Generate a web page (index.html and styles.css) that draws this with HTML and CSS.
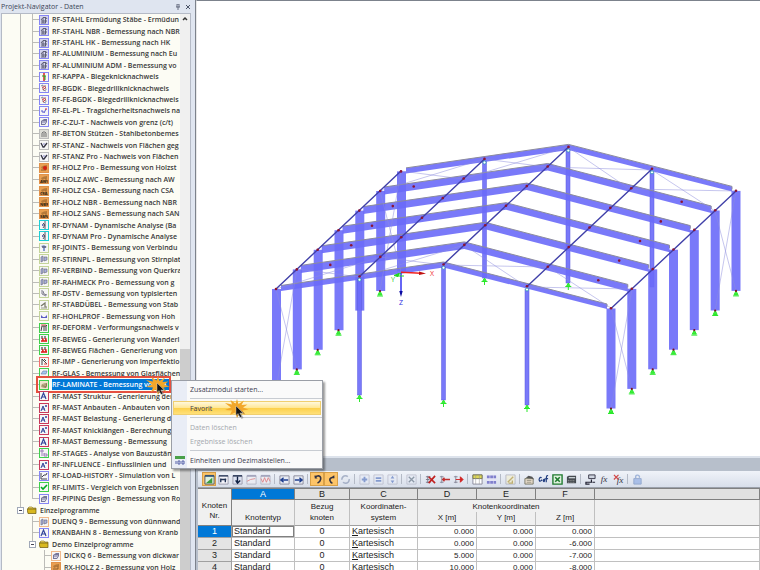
FILE: index.html
```html
<!DOCTYPE html>
<html lang="de">
<head>
    <meta charset="UTF-8">
    <title>Projekt-Navigator - Daten</title>
    <link rel="stylesheet" href="styles.css">
</head>
<body>
    <!-- Shared icons -->
    <svg class="defs" aria-hidden="true">
        <symbol id="i-steel" viewBox="0 0 8 8"><path d="M0 0h8v8H0z" fill="#d4d4ee"/><path d="M1 4l2-2.500h3L7 3M3 2v5M5.500 2v5M1 5h6M1 7h5" fill="none" stroke="#55556a" stroke-width=".9"/></symbol>
        <symbol id="i-kappa" viewBox="0 0 8 8"><path d="M4 0v8" stroke="#d22" stroke-width="1.500"/><path d="M2 3h4M5 3v4" stroke="#2a2"/></symbol>
        <symbol id="i-bgdk" viewBox="0 0 8 8"><path d="M1 2l2-1v5l3 1M5 1l1 5" fill="none" stroke="#8a8a9a"/><path d="M2 4l3-2M3 6l3-3" stroke="#d44"/></symbol>
        <symbol id="i-elpl" viewBox="0 0 8 8"><path d="M1 4h2v2M4 6l2-4" fill="none" stroke="#55c"/><path d="M5 2h2" stroke="#d33"/></symbol>
        <symbol id="i-czut" viewBox="0 0 8 8"><path d="M1 3l3-2h3v3L5 7H1z" fill="#77779a"/><path d="M2 4h4M2 5.500h3" stroke="#dde"/></symbol>
        <symbol id="i-beton" viewBox="0 0 8 8"><path d="M0 0h8v8H0z" fill="#deded8"/><path d="M2 7V3l1-1h2l1 1v4M4 3v4" fill="none" stroke="#777"/></symbol>
        <symbol id="i-stanz" viewBox="0 0 8 8"><path d="M1 2l2 4h1l3-4" fill="none" stroke="#334" stroke-width="1.300"/><path d="M3 3h2" stroke="#88c"/></symbol>
        <symbol id="i-holz" viewBox="0 0 8 8"><path d="M0 0h8v8H0z" fill="#e9a052"/><path d="M1 3l3-1.500L7 1v2L2 5z" fill="#b5793a"/><path d="M1 6h5V3" fill="none" stroke="#7b5226" stroke-width=".8"/></symbol>
        <symbol id="i-dynam" viewBox="0 0 8 8"><path d="M5 0v8M2 4h3M3 2l2 2-2 3" fill="none" stroke="#556"/><path d="M2 4h1" stroke="#33c"/></symbol>
        <symbol id="i-joint" viewBox="0 0 8 8"><path d="M1 2l3-1 3 2-2 1v3H3V4z" fill="#8a9ad0"/><path d="M2 3h4" stroke="#445"/></symbol>
        <symbol id="i-plate" viewBox="0 0 8 8"><path d="M1 2l2-1v5l-2 1zM4 2h3v3L4 6z" fill="#a8b0dc" stroke="#667" stroke-width=".6"/></symbol>
        <symbol id="i-dstv" viewBox="0 0 8 8"><path d="M2 1v4l4 2M3 2l1 3 3 1" fill="none" stroke="#7c7c8c"/></symbol>
        <symbol id="i-dowel" viewBox="0 0 8 8"><path d="M1 5l4-3v4h2" fill="none" stroke="#776" stroke-width="1.200"/><path d="M1 7h6" stroke="#998"/></symbol>
        <symbol id="i-hohl" viewBox="0 0 8 8"><path d="M1 3v3h6V3L5 5H3z" fill="#5a5ac4"/></symbol>
        <symbol id="i-deform" viewBox="0 0 8 8"><path d="M1 7L2 2h4l1-1M4 2v5M6 2v5" fill="none" stroke="#444"/><path d="M1 1h5" stroke="#d55"/></symbol>
        <symbol id="i-beweg" viewBox="0 0 8 8"><path d="M2 1v3M5 1v3" stroke="#222"/><path d="M1 6h6M2 4h1v2M5 4h1v2" fill="none" stroke="#d11" stroke-width="1.300"/></symbol>
        <symbol id="i-imp" viewBox="0 0 8 8"><path d="M2 1v6M2 1l5 5M4 1l2 2" stroke="#444"/><path d="M4 6h3" stroke="#d44"/></symbol>
        <symbol id="i-glas" viewBox="0 0 8 8"><path d="M1 5l2-3h4L6 5z" fill="#a6c8ee" stroke="#67a" stroke-width=".6"/></symbol>
        <symbol id="i-lam" viewBox="0 0 8 8"><path d="M0 0h8v8H0z" fill="#eee4cc"/><path d="M1 6l1-3 5-1v3L6 7z" fill="#8b7a55"/><path d="M1 4l5-1M1 5.500l5-1" stroke="#ddd0a8" stroke-width=".6"/></symbol>
        <symbol id="i-mast" viewBox="0 0 8 8"><path d="M1 7l2.500-6L6 7M2 5h4" fill="none" stroke="#33479c" stroke-width="1.200"/></symbol>
        <symbol id="i-mast2" viewBox="0 0 8 8"><path d="M1 7l2-5 2 5M2 5h3M6 1v2M5 2h2" fill="none" stroke="#33479c"/></symbol>
        <symbol id="i-stages" viewBox="0 0 8 8"><path d="M1 1h2v2H1zM2 4v3M4 4v3h3V5M4 5h3" fill="none" stroke="#86a" stroke-width=".8"/></symbol>
        <symbol id="i-load" viewBox="0 0 8 8"><path d="M1 1v6h6M2 5l2-2h2l1-2" fill="none" stroke="#445"/></symbol>
        <symbol id="i-check" viewBox="0 0 8 8"><path d="M1 4l2 2 4-4" fill="none" stroke="#0a2" stroke-width="1.600"/></symbol>
        <symbol id="i-folder" viewBox="0 0 10 8"><path d="M1 2l1-1h3l1 1h3v1H1z" fill="#f7e06a" stroke="#7a6410" stroke-width=".6"/><path d="M0 3h9v4.500H1z" fill="#d8b820" stroke="#6a560c" stroke-width=".7"/></symbol>
        <symbol id="i-burst" viewBox="0 0 24 20">
            <path d="M12 0l1.500 5L19 1.500 16.500 6l6-.5-4.500 3 5.500 2-6 1 3 4.500-5.500-3L12 19l-2-5.500L5 16l2-4.500-7-.5 6-2.500L0 4l7 1.500L5.500 1l5 3.500z" fill="#f2a72b"/>
            <path d="M12 8v10l2.500-2 2 4 2-1-2-4 3.500-.5z" fill="#555" opacity=".4"/>
            <path d="M11 7v9.500l2-2 2 4 1.800-1-2-3.500H18z" fill="#111" stroke="#ddd" stroke-width=".4"/>
        </symbol>
    </svg>

    <!-- Project navigator -->
    <aside class="navigator">
        <header class="nav-title">
            <h1>Projekt-Navigator - Daten</h1>
            <button class="nav-btn" aria-label="Anheften"><svg viewBox="0 0 6 6"><path d="M2 0v3M4 0v3M1 3h4M3 3v3M2 0h2" fill="none" stroke="#4b5468" stroke-width=".8"/></svg></button>
            <button class="nav-btn" aria-label="Schließen"><svg viewBox="0 0 6 6"><path d="M1 1l4 4M5 1L1 5" stroke="#4b5468"/></svg></button>
        </header>
        <div class="nav-body">
            <ul class="tree">
                <li><svg class="ico blue"><use href="#i-steel"/></svg><span>RF-STAHL Ermüdung Stäbe - Ermüdun</span></li>
                <li><svg class="ico blue"><use href="#i-steel"/></svg><span>RF-STAHL NBR - Bemessung nach NBR</span></li>
                <li><svg class="ico blue"><use href="#i-steel"/></svg><span>RF-STAHL HK - Bemessung nach HK</span></li>
                <li><svg class="ico blue"><use href="#i-steel"/></svg><span>RF-ALUMINIUM - Bemessung nach Eu</span></li>
                <li><svg class="ico blue"><use href="#i-steel"/></svg><span>RF-ALUMINIUM ADM - Bemessung vo</span></li>
                <li><svg class="ico blue"><use href="#i-kappa"/></svg><span>RF-KAPPA - Biegeknicknachweis</span></li>
                <li><svg class="ico blue"><use href="#i-bgdk"/></svg><span>RF-BGDK - Biegedrillknicknachweis</span></li>
                <li><svg class="ico blue"><use href="#i-bgdk"/></svg><span>RF-FE-BGDK - Biegedrillknicknachweis</span></li>
                <li><svg class="ico blue"><use href="#i-elpl"/></svg><span>RF-EL-PL - Tragsicherheitsnachweis na</span></li>
                <li><svg class="ico blue"><use href="#i-czut"/></svg><span>RF-C-ZU-T - Nachweis von grenz (c/t)</span></li>
                <li><svg class="ico gray"><use href="#i-beton"/></svg><span>RF-BETON Stützen - Stahlbetonbemes</span></li>
                <li><svg class="ico gray"><use href="#i-stanz"/></svg><span>RF-STANZ - Nachweis von Flächen geg</span></li>
                <li><svg class="ico gray"><use href="#i-stanz"/></svg><span>RF-STANZ Pro - Nachweis von Flächen</span></li>
                <li><svg class="ico orange"><use href="#i-holz"/><circle cx="5" cy="4" r="2" fill="#d21f10"/></svg><span>RF-HOLZ Pro - Bemessung von Holzst</span></li>
                <li><svg class="ico orange"><use href="#i-holz"/><text x="0" y="8">AWC</text></svg><span>RF-HOLZ AWC - Bemessung nach AW</span></li>
                <li><svg class="ico orange"><use href="#i-holz"/><text x="0" y="8">CSA</text></svg><span>RF-HOLZ CSA - Bemessung nach CSA</span></li>
                <li><svg class="ico orange"><use href="#i-holz"/><text x="0" y="8">NBR</text></svg><span>RF-HOLZ NBR - Bemessung nach NBR</span></li>
                <li><svg class="ico orange"><use href="#i-holz"/><text x="0" y="8">SAN</text></svg><span>RF-HOLZ SANS - Bemessung nach SAN</span></li>
                <li><svg class="ico cyan"><use href="#i-dynam"/></svg><span>RF-DYNAM - Dynamische Analyse (Ba</span></li>
                <li><svg class="ico cyan"><use href="#i-dynam"/></svg><span>RF-DYNAM Pro - Dynamische Analyse</span></li>
                <li><svg class="ico olive"><use href="#i-joint"/></svg><span>RF-JOINTS - Bemessung von Verbindu</span></li>
                <li><svg class="ico olive"><use href="#i-plate"/></svg><span>RF-STIRNPL - Bemessung von Stirnplat</span></li>
                <li><svg class="ico olive"><use href="#i-plate"/></svg><span>RF-VERBIND - Bemessung von Querkra</span></li>
                <li><svg class="ico olive"><use href="#i-plate"/></svg><span>RF-RAHMECK Pro - Bemessung von g</span></li>
                <li><svg class="ico olive"><use href="#i-dstv"/></svg><span>RF-DSTV - Bemessung von typisierten</span></li>
                <li><svg class="ico olive"><use href="#i-dowel"/></svg><span>RF-STABDÜBEL - Bemessung von Stab</span></li>
                <li><svg class="ico olive"><use href="#i-hohl"/></svg><span>RF-HOHLPROF - Bemessung von Hoh</span></li>
                <li><svg class="ico green"><use href="#i-deform"/></svg><span>RF-DEFORM - Verformungsnachweis v</span></li>
                <li><svg class="ico green"><use href="#i-beweg"/></svg><span>RF-BEWEG - Generierung von Wanderl</span></li>
                <li><svg class="ico green"><use href="#i-beweg"/></svg><span>RF-BEWEG Flächen - Generierung von</span></li>
                <li><svg class="ico red"><use href="#i-imp"/></svg><span>RF-IMP - Generierung von Imperfektio</span></li>
                <li><svg class="ico green"><use href="#i-glas"/></svg><span>RF-GLAS - Bemessung von Glasflächen</span></li>
                <li class="selected"><svg class="ico green"><use href="#i-lam"/></svg><span>RF-LAMINATE - Bemessung von La</span></li>
                <li><svg class="ico crimson"><use href="#i-mast"/></svg><span>RF-MAST Struktur - Generierung der</span></li>
                <li><svg class="ico crimson"><use href="#i-mast2"/></svg><span>RF-MAST Anbauten - Anbauten von</span></li>
                <li><svg class="ico crimson"><use href="#i-mast2"/></svg><span>RF-MAST Belastung - Generierung d</span></li>
                <li><svg class="ico crimson"><use href="#i-mast2"/></svg><span>RF-MAST Knicklängen - Berechnung</span></li>
                <li><svg class="ico crimson"><use href="#i-mast"/></svg><span>RF-MAST Bemessung - Bemessung</span></li>
                <li><svg class="ico green"><use href="#i-stages"/></svg><span>RF-STAGES - Analyse von Bauzustän</span></li>
                <li><svg class="ico crimson"><use href="#i-mast2"/></svg><span>RF-INFLUENCE - Einflusslinien und</span></li>
                <li><svg class="ico blue"><use href="#i-load"/></svg><span>RF-LOAD-HISTORY - Simulation von L</span></li>
                <li><svg class="ico green"><use href="#i-check"/></svg><span>RF-LIMITS - Vergleich von Ergebnissen</span></li>
                <li class="last"><svg class="ico blue"><use href="#i-czut"/></svg><span>RF-PIPING Design - Bemessung von Ro</span></li>
                <li class="folder"><i class="expander"></i><svg class="dir"><use href="#i-folder"/></svg><span>Einzelprogramme</span></li>
                <li class="program"><svg class="ico peach"><use href="#i-plate"/></svg><span>DUENQ 9 - Bemessung von dünnwand</span></li>
                <li class="program"><svg class="ico blue"><use href="#i-mast"/></svg><span>KRANBAHN 8 - Bemessung von Kranb</span></li>
                <li class="subfolder"><i class="expander"></i><svg class="dir"><use href="#i-folder"/></svg><span>Demo Einzelprogramme</span></li>
                <li class="demo"><svg class="ico peach"><use href="#i-czut"/></svg><span>DICKQ 6 - Bemessung von dickwar</span></li>
                <li class="demo"><svg class="ico orange"><use href="#i-holz"/></svg><span>RX-HOLZ 2 - Bemessung von Holz</span></li>
            </ul>
            <div class="scrollbar">
                <svg viewBox="0 0 10 10"><path d="M3 6l2-2 2 2" fill="none" stroke="#333" stroke-width="1.500"/></svg>
                <div class="thumb"></div>
            </div>
        </div>
    </aside>

    <main class="workspace">
        <!-- 3D model -->
        <section class="model">
            <svg viewBox="197 1 563 455">
                <defs>
                    <g id="cols">
                        <rect x="272" y="289" width="9" height="100"/>
                        <rect x="606.500" y="308.500" width="9" height="100"/>
                    </g>
                    <g id="bay">
                        <use href="#cols"/>
                        <path d="M280 285l163.500-23.500L607 304v7l-163.500-42.500L280 292.500z"/>
                        <path class="edge" d="M280 285l163.500-23.500L607 304v3"/>
                    </g>
                    <g id="gable">
                        <use href="#cols"/>
                        <path d="M281 285.500L443.500 262 607 304v5l-163.500-41.500L281 291z"/>
                        <path class="edge" d="M281 285.500L443.500 262 607 304v3"/>
                    </g>
                    <g id="nodes">
                        <circle cx="276" cy="289" r="1.300"/><circle cx="359.500" cy="276.500" r="1.300"/><circle cx="443.500" cy="264.500" r="1.300"/>
                        <circle cx="527" cy="286.300" r="1.300"/><circle cx="611" cy="308.300" r="1.300"/>
                    </g>
                    <g id="mid"><circle cx="309.500" cy="284.500" r="1.300"/><circle cx="577.500" cy="299.800" r="1.300"/></g>
                    <g id="sup"><path d="M0 0l2 4h-4zM-3 5h6" fill="#3cf03c" stroke="#2ce82c"/><circle r="1.100" fill="#7a1020"/></g>
                    <g id="sup2"><path d="M0 0l2 3.500h-4zM-3 3.500h6M0 3v4" fill="#3cf03c" stroke="#2ce82c"/></g>
                    <g id="feet"><use href="#sup" x="276" y="389"/><use href="#sup" x="611" y="408.500"/></g>
                </defs>

                <g class="members">
                    <rect x="482.500" y="161" width="4" height="117"/><rect x="566" y="149" width="4" height="134"/><rect x="650" y="171" width="4" height="116"/>
                    <use href="#gable" x="125" y="-117.600"/>
                    <use href="#bay" x="104.200" y="-98"/>
                    <use href="#bay" x="83.300" y="-78.400"/>
                    <use href="#bay" x="62.500" y="-58.800"/>
                    <use href="#bay" x="41.700" y="-39.200"/>
                    <use href="#bay" x="20.800" y="-19.600"/>
                    <use href="#gable"/>
                    <rect x="357.500" y="279" width="4" height="116"/>
                    <rect x="441.500" y="267" width="4" height="133"/>
                    <rect x="525" y="289" width="4" height="116"/>
                </g>

                <!-- bracing -->
                <g class="brace">
                    <path d="M276 289l21 81M297 269l-21 120M380 191l21 81M401 171l-21 120"/>
                    <path d="M611 308l21 81M632 289l-21 120M715 211l21 80M736 191l-21 120"/>
                    <path d="M401 171l62 8M484 159l-104 32M484 159l63 8M568 147l-105 32M568 147l63 43M652 170l-105-3M652 170l63 41M736 191l-105-2"/>
                    <path d="M276 289l104-32M360 277l-63-8M360 277l104-32M443 265l-63-8M443 265l105 2M527 287l-63-42M527 287l105 2M611 308l-63-41"/>
                </g>
                <path class="purlin" d="M276 289l125-118M359.500 276.500L484.500 159M443.500 264.500L568.500 147M527 286.500L652 169M611 308.500L736 191"/>

                <g fill="#8c1432">
                    <use href="#nodes"/><use href="#nodes" x="20.800" y="-19.600"/><use href="#nodes" x="41.700" y="-39.200"/><use href="#nodes" x="62.500" y="-58.800"/>
                    <use href="#nodes" x="83.300" y="-78.400"/><use href="#nodes" x="104.200" y="-98"/><use href="#nodes" x="125" y="-117.600"/>
                    <use href="#mid" x="20.800" y="-19.600"/><use href="#mid" x="41.700" y="-39.200"/><use href="#mid" x="62.500" y="-58.800"/>
                    <use href="#mid" x="83.300" y="-78.400"/><use href="#mid" x="104.200" y="-98"/>
                </g>
                <g class="hinge">
                    <circle cx="359.500" cy="279.700" r="1.500"/><circle cx="443.500" cy="267.700" r="1.500"/><circle cx="527" cy="289.500" r="1.500"/>
                    <circle cx="484.500" cy="162.500" r="1.500"/><circle cx="568.300" cy="150.500" r="1.500"/><circle cx="652" cy="172.300" r="1.500"/>
                </g>

                <!-- supports -->
                <use href="#feet"/><use href="#feet" x="20.800" y="-19.600"/><use href="#feet" x="41.700" y="-39.200"/><use href="#feet" x="62.500" y="-58.800"/>
                <use href="#sup" x="380" y="291"/><use href="#sup" x="694.300" y="330.100"/><use href="#sup" x="715.200" y="310.500"/><use href="#sup" x="736" y="290.900"/>
                <use href="#sup2" x="359.500" y="395"/><use href="#sup2" x="443.500" y="400"/><use href="#sup2" x="527" y="405"/>
                <use href="#sup2" x="484.500" y="278"/><use href="#sup2" x="568.300" y="283"/>

                <!-- axes -->
                <path d="M401 272.300l20 1" stroke="#f02020" stroke-width="1.500"/><path d="M419 271.500l7 2-7 1.500z" fill="#c01010"/>
                <path d="M401 273v19" stroke="#1414f0" stroke-width="1.300"/><path d="M399.300 291h3.400l-1.700 6z" fill="#0a0aa0"/>
                <path d="M401 273l-5 3M394 275.500l5-2-1 3zM397 276h7" stroke="#20d820" fill="#20d820"/>
                <text x="430" y="276" fill="#f03030">X</text>
                <text x="391" y="282" fill="#20c820">Y</text>
                <text x="399" y="305" fill="#3030e0">Z</text>
            </svg>
        </section>

        <!-- Table window -->
        <section class="tables">
            <div class="caption"></div>
            <div class="toolbar">
                <button class="on" aria-label="Tabelle"><svg viewBox="0 0 12 12"><path d="M1 2h10v9H1z" fill="#dff0dc" stroke="#556"/><path d="M2 10l7-6v6z" fill="#3c9c3c"/><path d="M1 2h10" stroke="#357" stroke-width="2"/></svg></button>
                <button aria-label="Zeile einfügen"><svg viewBox="0 0 12 12"><path d="M1 2h10v9H1z" fill="#f4f4fa" stroke="#99a"/><path d="M1 2h10M3 6h6M3 9V5M8 9V5" stroke="#235" stroke-width="1.500"/></svg></button>
                <button aria-label="Zeile anfügen"><svg viewBox="0 0 12 12"><path d="M1 2h10v9H1z" fill="#dde2f0" stroke="#99a"/><path d="M1 2h10M6 3v6M4 7l2 3 3-3" stroke="#124" stroke-width="1.500" fill="none"/></svg></button>
                <button class="off" aria-label="Diagramm"><svg viewBox="0 0 12 12"><path d="M1 2h10v9H1z" fill="#f0f0f4" stroke="#99a"/><path d="M1 2h10" stroke="#779" stroke-width="2"/><path d="M1 8l4-2 5-1" stroke="#d55" fill="none"/></svg></button>
                <button class="off" aria-label="Verlauf"><svg viewBox="0 0 12 12"><path d="M1 2h10v9H1z" fill="#f0f0f4" stroke="#99a"/><path d="M1 2h10" stroke="#779" stroke-width="2"/><path d="M1 5l2 4 2-5 2 5 2-5 2 4" stroke="#d44" fill="none"/></svg></button>
                <i></i>
                <button aria-label="Zurück"><svg viewBox="0 0 12 12"><path d="M1 2h10v9H1z" fill="#e8ecf4" stroke="#889"/><path d="M2 6.500h8M5 4L2 6.500 5 9" stroke="#1f3f90" stroke-width="1.500" fill="none"/></svg></button>
                <button aria-label="Weiter"><svg viewBox="0 0 12 12"><path d="M1 2h10v9H1z" fill="#e8ecf4" stroke="#889"/><path d="M2 6.500h8M7 4l3 2.500L7 9" stroke="#1f3f90" stroke-width="1.500" fill="none"/></svg></button>
                <i></i>
                <button class="on" aria-label="Rückgängig"><svg viewBox="0 0 12 12"><path d="M3 3l4-1c4 1 3 6-1 8" fill="none" stroke="#334" stroke-width="1.700"/><path d="M3 1v4h3z" fill="#334"/></svg></button>
                <button class="on" aria-label="Wiederholen"><svg viewBox="0 0 12 12"><path d="M9 3L6 4c-3 1-2 5 1 6" fill="none" stroke="#334" stroke-width="1.700"/><path d="M9 1v4L6 4z" fill="#334"/></svg></button>
                <button class="off" aria-label="Aktualisieren"><svg viewBox="0 0 12 12"><circle cx="6" cy="6" r="4" fill="none" stroke="#7d8cac" stroke-width="1.700" stroke-dasharray="9 3"/></svg></button>
                <i></i>
                <button class="off" aria-label="Hinzufügen"><svg viewBox="0 0 12 12"><path d="M1 1h10v10H1z" fill="#e6ebf6" stroke="#aab"/><path d="M6 3v6M3 6h6" stroke="#4668b8" stroke-width="2"/></svg></button>
                <button class="off" aria-label="Ausgleichen"><svg viewBox="0 0 12 12"><path d="M1 1h10v10H1z" fill="#e6ebf6" stroke="#aab"/><path d="M3 4.500h6M3 7.500h6" stroke="#4668b8" stroke-width="2"/></svg></button>
                <button class="off" aria-label="Sortieren"><svg viewBox="0 0 12 12"><path d="M1 1h10v10H1z" fill="#e6ebf6" stroke="#aab"/><path d="M6 2l2 3H4zM6 10l2-3H4z" fill="#4668b8"/></svg></button>
                <i></i>
                <button class="off" aria-label="Leeren"><svg viewBox="0 0 12 12"><path d="M1 1h10v10H1z" fill="#e6ebf6" stroke="#aab"/><path d="M3 3l6 6M9 3L3 9" stroke="#567" stroke-width="1.500"/></svg></button>
                <i></i>
                <button aria-label="Zeile löschen"><svg viewBox="0 0 12 12"><path d="M1 3h5M1 6h4M1 9h5M3 2v8" stroke="#778"/><path d="M4 3l7 7M11 2l-7 8" stroke="#c02020" stroke-width="1.800"/></svg></button>
                <button aria-label="Zeile links"><svg viewBox="0 0 12 12"><path d="M1 3h4M1 9h4M3 2v8" stroke="#889"/><path d="M4 6h8M6 4L4 6l2 2" stroke="#c03030" stroke-width="1.500" fill="none"/></svg></button>
                <button aria-label="Zeile rechts"><svg viewBox="0 0 12 12"><path d="M1 3h4M1 9h4M3 2v8" stroke="#889"/><path d="M3 6h7M8 3l3 3-3 3z" stroke="#d02020" fill="#d02020"/></svg></button>
                <i></i>
                <button aria-label="Spalten"><svg viewBox="0 0 12 12"><path d="M1 1h10v10H1z" fill="#fff" stroke="#889"/><path d="M1 1h10v4H1z" fill="#ded858" stroke="#775"/><path d="M4 1v10M8 1v10" stroke="#999" stroke-width=".6"/></svg></button>
                <button aria-label="Zeilen"><svg viewBox="0 0 12 12"><path d="M1 1h10v10H1z" fill="#e4e4f6"/><path d="M1 3h10M1 9h10" stroke="#8080cc" stroke-width="3" stroke-dasharray="3 .6"/></svg></button>
                <i></i>
                <button class="off" aria-label="Bearbeiten"><svg viewBox="0 0 12 12"><path d="M1 1h10v10H1z" fill="#f3efcf" stroke="#99a"/><path d="M3 9l6-6M8 7v3H4" stroke="#a98c20" stroke-width="1.500" fill="none"/></svg></button>
                <i></i>
                <button aria-label="Eigenschaften"><svg viewBox="0 0 12 12"><path d="M1 5h9v6H1z" fill="#e8dccc" stroke="#776"/><path d="M2 4l3-2 4 1 2 3-3-1z" fill="#555"/><path d="M3 7h5M3 9h5" stroke="#776" stroke-width=".7"/></svg></button>
                <button aria-label="Suchen"><svg viewBox="0 0 12 12"><path d="M4 4C2 3 0 6 2 8l2-1V6M6 6c2 0 1 3 0 2s1-3 2-2M11 2C9 1 9 4 9 9M8 5h3" fill="none" stroke="#223e80" stroke-width="1.300"/></svg></button>
                <button aria-label="Excel"><svg viewBox="0 0 12 12"><path d="M1 1h10v10H1z" fill="#dff2df" stroke="#1f7a2f" stroke-width="1.500"/><path d="M3.500 3.500l5 5M8.500 3.500l-5 5" stroke="#1f7a2f" stroke-width="1.700"/></svg></button>
                <button aria-label="Rechner"><svg viewBox="0 0 12 12"><path d="M1 3l2-1h8v8H1z" fill="#444a50"/><path d="M3 4h7" stroke="#c8d0d4" stroke-width="1.500"/><path d="M2 7h8M2 9h8" stroke="#aaa" stroke-dasharray="1 1"/></svg></button>
                <i></i>
                <button aria-label="Auswahl"><svg viewBox="0 0 12 12"><path d="M4 1h7v4H4z" fill="#cfd5e0" stroke="#334"/><path d="M7 6v3H1v2h4M8 9h3" fill="none" stroke="#223" stroke-width="1.300"/></svg></button>
                <button aria-label="Formel"><svg viewBox="0 0 12 12"><text class="fx" x="2" y="9">fx</text></svg></button>
                <button aria-label="Formel löschen"><svg viewBox="0 0 12 12"><text class="fx" x="4" y="10">fx</text><path d="M1 1l5 5M6 1L1 6" stroke="#d04848" stroke-width="1.300"/></svg></button>
                <i></i>
                <button class="off" aria-label="Sperren"><svg viewBox="0 0 12 12"><path d="M4 5V3c0-3 5-2 4 1" fill="none" stroke="#7090c8" stroke-width="1.500"/><path d="M2 5h8v6H2z" fill="#86a6e4" stroke="#6080b8"/></svg></button>
            </div>
            <div class="grid">
                <table>
                    <colgroup><col class="c-nr"><col class="c-a"><col class="c-b"><col class="c-c"><col class="c-d"><col class="c-d"><col class="c-d"><col></colgroup>
                    <thead>
                        <tr class="letters"><th rowspan="3" class="corner">Knoten<br>Nr.</th><th class="current">A</th><th>B</th><th>C</th><th>D</th><th>E</th><th>F</th><th></th></tr>
                        <tr class="names"><th></th><th>Bezug</th><th>Koordinaten-</th><th colspan="3">Knotenkoordinaten</th><th></th></tr>
                        <tr class="names units"><th>Knotentyp</th><th>knoten</th><th>system</th><th>X [m]</th><th>Y [m]</th><th>Z [m]</th><th></th></tr>
                    </thead>
                    <tbody>
                        <tr><th class="current">1</th><td class="focus">Standard</td><td class="mid">0</td><td><u>K</u>artesisch</td><td class="num">0.000</td><td class="num">0.000</td><td class="num">0.000</td><td></td></tr>
                        <tr><th>2</th><td>Standard</td><td class="mid">0</td><td><u>K</u>artesisch</td><td class="num">0.000</td><td class="num">0.000</td><td class="num">-6.000</td><td></td></tr>
                        <tr><th>3</th><td>Standard</td><td class="mid">0</td><td><u>K</u>artesisch</td><td class="num">5.000</td><td class="num">0.000</td><td class="num">-7.000</td><td></td></tr>
                        <tr><th>4</th><td>Standard</td><td class="mid">0</td><td><u>K</u>artesisch</td><td class="num">10.000</td><td class="num">0.000</td><td class="num">-8.000</td><td></td></tr>
                    </tbody>
                </table>
            </div>
        </section>
    </main>

    <!-- Context menu -->
    <div class="context-menu">
        <button>Zusatzmodul starten...</button>
        <hr>
        <button class="hover">Favorit</button>
        <hr>
        <button disabled>Daten löschen</button>
        <button disabled>Ergebnisse löschen</button>
        <hr>
        <button><svg viewBox="0 0 10 9"><path d="M0 0h10v3H0z" fill="#4aa04a"/><path d="M1 5v3M3 5h2v3H3zM7 5h2v3H7z" fill="none" stroke="#5560a8"/></svg>Einheiten und Dezimalstellen...</button>
    </div>
    <svg class="pointer on-tree"><use href="#i-burst"/></svg>
    <svg class="pointer on-menu"><use href="#i-burst"/></svg>
</body>
</html>
```
FILE: styles.css
```css
* {
    box-sizing: border-box;
}

body {
    margin: 0;
    height: 100vh;
    display: flex;
    overflow: hidden;
    position: relative;
    background: #dfe5f0;
    font-family: "Open Sans", "Noto Sans", sans-serif;
    font-size: 7px;
    color: #1c1c1c;
}

button {
    font: inherit;
    color: inherit;
    border: none;
    background: none;
    padding: 0;
}

.defs {
    position: absolute;
    width: 0;
    height: 0;
}

/* Navigator */
.navigator {
    width: 195px;
    flex: none;
    display: flex;
    flex-direction: column;
    padding-left: 1px;
    padding-right: 4px;
    background: #dfe5f0;
}

.nav-title {
    display: flex;
    align-items: center;
    gap: 4px;
    height: 13px;
    flex: none;
    color: #3a4456;
}

.nav-title h1 {
    flex: 1;
    margin: 0;
    font-size: 7px;
    font-weight: normal;
}

.nav-btn {
    width: 6px;
    height: 6px;
    display: flex;
}

.nav-btn svg {
    width: 6px;
    height: 6px;
}

.nav-body {
    flex: 1;
    min-height: 0;
    display: flex;
    border: 1px solid #b4bac6;
    border-bottom: none;
    background: #fcfcf4;
}

.tree {
    flex: 1;
    min-width: 0;
    margin: 0 0 -3px;
    padding: 0;
    list-style: none;
    display: flex;
    flex-direction: column;
    font-weight: 600;
    color: #383838;
}

.tree li {
    --line: #bcbcb8;
    flex: 1;
    min-height: 0;
    display: flex;
    align-items: center;
    gap: 3px;
    padding-left: 37px;
    position: relative;
    background:
        linear-gradient(var(--line), var(--line)) 18px 0 / 1px 100% no-repeat,
        linear-gradient(var(--line), var(--line)) 30px 0 / 1px 100% no-repeat,
        linear-gradient(var(--line), var(--line)) 30px 50% / 7px 1px no-repeat;
}

.tree li.last {
    background-size: 1px 100%, 1px 50%, 7px 1px;
}

.tree li.folder {
    padding-left: 15px;
    background-size: 1px 50%, 0 0, 0 0;
}

.tree li.program {
    background-size: 0 0, 1px 100%, 7px 1px;
}

.tree li.subfolder {
    padding-left: 27px;
    background-size: 0 0, 1px 50%, 0 0;
}

.tree li.demo {
    padding-left: 49px;
    background-position: 0 0, 42px 0, 42px 50%;
    background-size: 0 0, 1px 100%, 7px 1px;
}

.tree span {
    flex: 1;
    min-width: 0;
    overflow: hidden;
    white-space: nowrap;
    line-height: 11px;
}

.ico {
    width: 10px;
    height: 10px;
    flex: none;
    border: 1px solid;
    background: #f6f6f6;
}

.ico text {
    font-size: 4px;
    font-weight: bold;
    fill: #2c2010;
}

.blue { border-color: #8686f4; }
.gray { border-color: #bcbcbc; }
.orange { border-color: #e0914a; }
.cyan { border-color: #1ccfd8; }
.olive { border-color: #c4d49a; }
.green { border-color: #3fd04c; }
.red { border-color: #f27070; }
.crimson { border-color: #c83a5c; }
.peach { border-color: #f0b98c; }

.dir {
    width: 10px;
    height: 8px;
    flex: none;
}

.expander {
    width: 7px;
    height: 7px;
    flex: none;
    border: 1px solid #a0a8b8;
    background: linear-gradient(#445, #445) center / 3px 1px no-repeat #fff;
}

.tree li.selected span {
    background: #0078d7;
    color: #fff;
    margin-right: 10px;
}

.tree li.selected::after {
    content: "";
    position: absolute;
    left: 34px;
    right: 9px;
    top: -3px;
    bottom: -3px;
    border: 2px solid #e5503f;
}

.scrollbar {
    width: 10px;
    flex: none;
    display: flex;
    flex-direction: column;
    background: #f0f0f0;
}

.scrollbar svg {
    height: 10px;
    flex: none;
}

.thumb {
    flex: 1;
    margin-top: 325px;
    background: #cdcdcd;
}

/* Workspace */
.workspace {
    flex: 1;
    min-width: 0;
    display: flex;
    flex-direction: column;
    border-left: 1px solid #7c828c;
}

.model {
    flex: 1;
    min-height: 0;
    display: flex;
    background: #fff;
    border-top: 1px solid #7c828c;
    border-left: 1px solid #e8e8e8;
}

.model svg {
    flex: 1;
    min-width: 0;
}

.model text {
    font-size: 7px;
}

.members {
    fill: #6a6af8;
    fill-opacity: .9;
}

.members rect {
    stroke: #5a5ae0;
    stroke-width: .5;
}

.edge {
    fill: none;
    stroke: #8c8c9c;
    stroke-width: 1;
}

.brace {
    fill: none;
    stroke: #8c8cdc;
    stroke-width: .5;
}

.purlin {
    fill: none;
    stroke: #4040a8;
    stroke-width: 1.4;
}

.hinge {
    fill: #fff;
    stroke: #1c98a8;
    stroke-width: .7;
}

/* Table window */
.tables {
    flex: none;
    height: 114px;
    display: flex;
    flex-direction: column;
    padding-left: 2px;
    border-top: 2px solid #dde3ec;
    background: #b7bfcb;
}

.caption {
    height: 13px;
    flex: none;
    background: #b7bfcb;
}

.toolbar {
    height: 17px;
    flex: none;
    display: flex;
    align-items: center;
    padding-left: 4px;
    background: linear-gradient(#f0f3f9, #d8deea);
    border-bottom: 1px solid #9aa0aa;
}

.toolbar button {
    width: 14px;
    height: 14px;
    flex: none;
    display: flex;
    align-items: center;
    justify-content: center;
}

.toolbar button.on {
    border: 1px solid #d8a048;
    background: #fdc468;
}

.toolbar button.off {
    opacity: .6;
}

.toolbar svg {
    width: 11px;
    height: 11px;
    flex: none;
    overflow: visible;
}

.toolbar i {
    width: 1px;
    height: 10px;
    flex: none;
    margin: 0 2px;
    background: #b4bac6;
}

.fx {
    font: italic 10px "Liberation Serif", serif;
    fill: #334;
}

.grid {
    flex: 1;
    min-height: 0;
    overflow: hidden;
    background: #fff;
    border-top: 1px solid #808080;
}

table {
    width: 100%;
    table-layout: fixed;
    border-collapse: separate;
    border-spacing: 0;
    font: 9px "Liberation Sans", sans-serif;
}

.c-nr { width: 34px; }
.c-a { width: 63px; }
.c-b { width: 55px; }
.c-c { width: 68px; }
.c-d { width: 59px; }

th, td {
    height: 12px;
    padding: 0 2px;
    line-height: 11px;
    text-align: left;
    white-space: nowrap;
    border-right: 1px solid #c0c0c0;
    border-bottom: 1px solid #c0c0c0;
}

th {
    background: #f0f0f0;
    text-align: center;
    font-weight: normal;
}

tbody th {
    background: #e4e4e4;
    border-color: #a0a0a0;
}

.letters th {
    height: 11px;
    line-height: 10px;
    background: #e1e1e1;
    border-color: #808080;
}

.letters th.corner {
    font-size: 8px;
    line-height: 10px;
    padding-top: 8px;
    background: #f0f0f0;
}

.names th {
    font-size: 8px;
    height: 12px;
    border-bottom: none;
}

.names.units th {
    height: 14px;
    line-height: 12px;
    padding-bottom: 1px;
    border-bottom: 1px solid #a0a0a0;
}

.letters th.current,
tbody th.current {
    background: #0078d7;
    color: #fff;
}

td.focus {
    box-shadow: inset 0 0 0 1px #808080;
}

td.mid {
    text-align: center;
}

td.num {
    font-size: 8px;
    text-align: right;
}

/* Context menu */
.context-menu {
    position: absolute;
    left: 171px;
    top: 380px;
    width: 152px;
    display: flex;
    flex-direction: column;
    padding: 1px;
    border: 1px solid #9a9ea6;
    background: linear-gradient(90deg, #e9edf6 15px, #fafafa 15px);
    box-shadow: 2px 2px 2px rgba(0, 0, 0, .4);
    color: #3c4050;
}

.context-menu button {
    height: 14px;
    padding-left: 17px;
    text-align: left;
    position: relative;
}

.context-menu button:disabled {
    color: #a4a8ae;
}

.context-menu .hover {
    border: 1px solid #f0cf70;
    padding-left: 16px;
    background: linear-gradient(#fff8dc, #ffe794 50%, #fcd04a 50%, #ffe07a);
}

.context-menu hr {
    width: 132px;
    margin: 2px 0 2px 17px;
    border: none;
    border-top: 1px solid #c8ccd2;
}

.context-menu svg {
    position: absolute;
    left: 2px;
    top: 3px;
    width: 10px;
    height: 9px;
}

.pointer {
    position: absolute;
    width: 24px;
    height: 20px;
}

.on-tree {
    left: 146px;
    top: 376px;
}

.on-menu {
    left: 225px;
    top: 399px;
}
```
